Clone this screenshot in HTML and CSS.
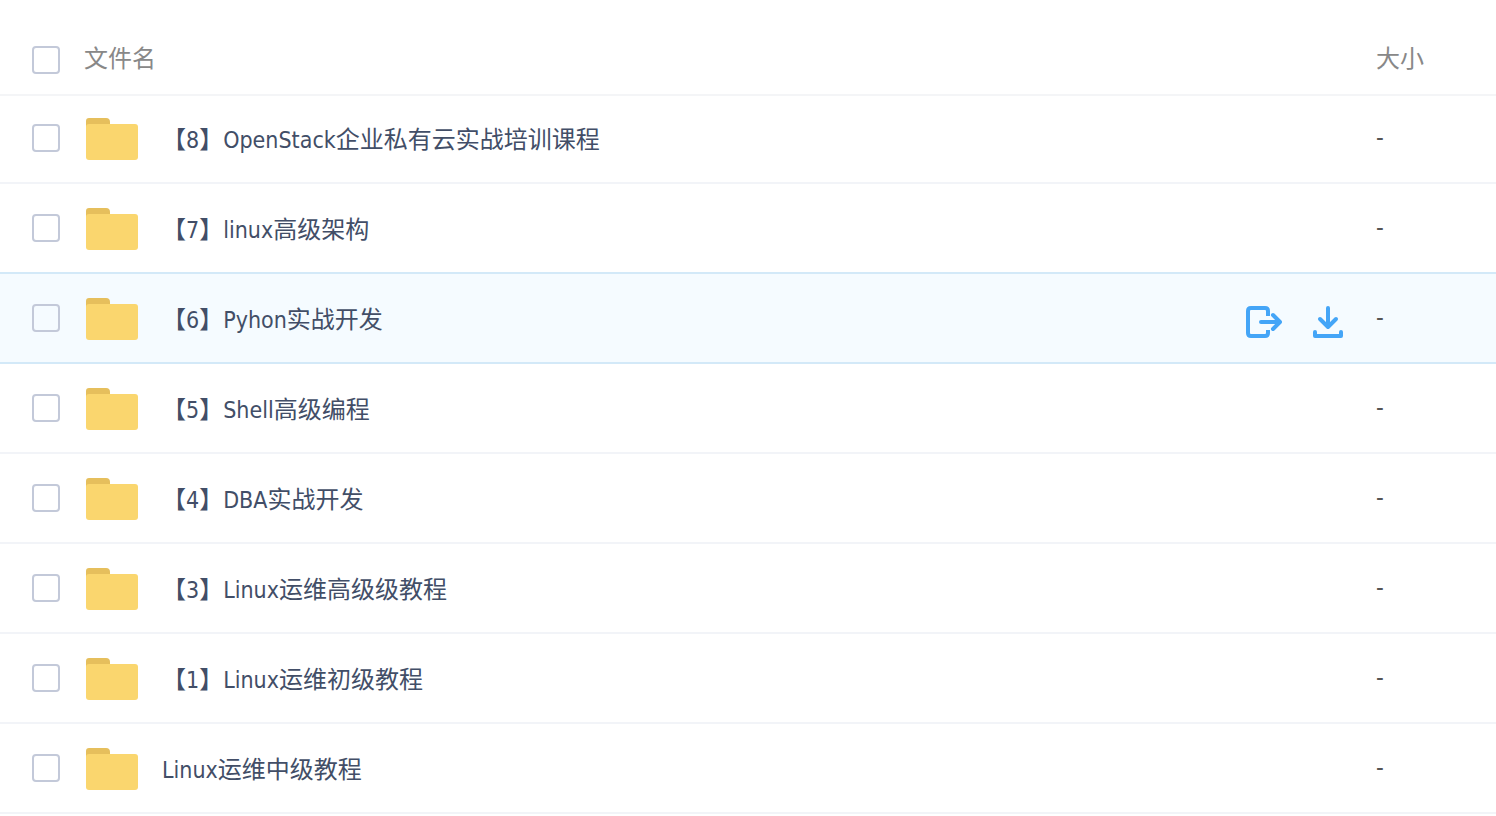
FILE: index.html
```html
<!DOCTYPE html>
<html lang="zh-CN">
<head>
<meta charset="utf-8">
<title>文件列表</title>
<link rel="stylesheet" href="styles.css">
</head>
<body>
<svg class="defs" aria-hidden="true">
<symbol id="folder" viewBox="0 0 52 42"><path d="M0 12V3Q0 0 3 0H20Q24 0 24 4V12Z" fill="#e6bf5c"/><rect y="6" width="52" height="36" rx="3" fill="#fad66e"/></symbol>
</svg>
<table class="files">
<thead>
<tr><th class="check"><input type="checkbox" aria-label="全选"></th><th class="name">文件名</th><th class="actions"></th><th class="size">大小</th></tr>
</thead>
<tbody>
<tr><td class="check"><input type="checkbox" id="f8"></td><td class="name"><label class="entry" for="f8"><svg class="folder"><use href="#folder"/></svg><span>【<span class="latin">8</span>】<span class="latin">OpenStack</span>企业私有云实战培训课程</span></label></td><td class="actions"></td><td class="size">-</td></tr>
<tr><td class="check"><input type="checkbox" id="f7"></td><td class="name"><label class="entry" for="f7"><svg class="folder"><use href="#folder"/></svg><span>【<span class="latin">7</span>】<span class="latin">linux</span>高级架构</span></label></td><td class="actions"></td><td class="size">-</td></tr>
<tr class="active"><td class="check"><input type="checkbox" id="f6"></td><td class="name"><label class="entry" for="f6"><svg class="folder"><use href="#folder"/></svg><span>【<span class="latin">6</span>】<span class="latin">Pyhon</span>实战开发</span></label></td><td class="actions"><div class="tools"><button type="button" aria-label="转存"><svg viewBox="0 0 38 34"><path stroke-linecap="butt" d="M24 11V6Q24 3 21 3H7Q4 3 4 6V28Q4 31 7 31H21Q24 31 24 28V25"/><path d="M17 17H35M29 10L36 17L29 24"/></svg></button><button type="button" aria-label="下载"><svg viewBox="0 0 38 34"><path d="M18 3V21M10 14L18 22L26 14M5 27V31H31V27"/></svg></button></div></td><td class="size">-</td></tr>
<tr><td class="check"><input type="checkbox" id="f5"></td><td class="name"><label class="entry" for="f5"><svg class="folder"><use href="#folder"/></svg><span>【<span class="latin">5</span>】<span class="latin">Shell</span>高级编程</span></label></td><td class="actions"></td><td class="size">-</td></tr>
<tr><td class="check"><input type="checkbox" id="f4"></td><td class="name"><label class="entry" for="f4"><svg class="folder"><use href="#folder"/></svg><span>【<span class="latin">4</span>】<span class="latin">DBA</span>实战开发</span></label></td><td class="actions"></td><td class="size">-</td></tr>
<tr><td class="check"><input type="checkbox" id="f3"></td><td class="name"><label class="entry" for="f3"><svg class="folder"><use href="#folder"/></svg><span>【<span class="latin">3</span>】<span class="latin">Linux</span>运维高级级教程</span></label></td><td class="actions"></td><td class="size">-</td></tr>
<tr><td class="check"><input type="checkbox" id="f1"></td><td class="name"><label class="entry" for="f1"><svg class="folder"><use href="#folder"/></svg><span>【<span class="latin">1</span>】<span class="latin">Linux</span>运维初级教程</span></label></td><td class="actions"></td><td class="size">-</td></tr>
<tr><td class="check"><input type="checkbox" id="f2"></td><td class="name"><label class="entry" for="f2"><svg class="folder"><use href="#folder"/></svg><span><span class="latin">Linux</span>运维中级教程</span></label></td><td class="actions"></td><td class="size">-</td></tr>
</tbody>
</table>
</body>
</html>
```
FILE: styles.css
```css
* { box-sizing: border-box; }
body { margin: 0; background: #fff; color: #424e67; font: 24px/36px "Noto Sans", "Noto Sans CJK SC", sans-serif; }
.defs { display: none; }
.files { width: 100%; border-collapse: separate; border-spacing: 0; table-layout: fixed; }
th, td { padding: 0; text-align: left; font-weight: 400; vertical-align: middle; }
th { height: 94px; padding-top: 22px; color: #888; box-shadow: 0 2px #f4f5f7; }
th.check { padding-top: 26px; }
td { height: 90px; border-bottom: 2px solid #f2f4f8; }
.check { width: 84px; padding-left: 32px; }
td.name { padding-top: 2px; }
.actions { width: 132px; }
.size { width: 120px; }
td.size { color: #555; font-family: "DejaVu Sans Condensed", "DejaVu Sans", sans-serif; }
input { display: block; appearance: none; width: 28px; height: 28px; margin: 0; border: 2px solid #c3c9d9; border-radius: 4px; background: transparent; }
.entry { display: flex; align-items: center; gap: 24px; padding-left: 2px; }
.folder { width: 52px; height: 42px; flex: none; }
.latin { font-family: "DejaVu Sans Condensed", "DejaVu Sans", sans-serif; font-size: 23px; }
.active td { background: #f5fbff; border-bottom-color: #d3e9f8; }
tr:has(+ .active) td { border-bottom-color: #d3e9f8; }
.tools { display: flex; gap: 28px; padding-top: 8px; }
button { width: 38px; height: 34px; padding: 0; border: 0; background: none; }
button svg { display: block; width: 38px; height: 34px; fill: none; stroke: #44a5f7; stroke-width: 4; stroke-linecap: round; stroke-linejoin: round; }
```
